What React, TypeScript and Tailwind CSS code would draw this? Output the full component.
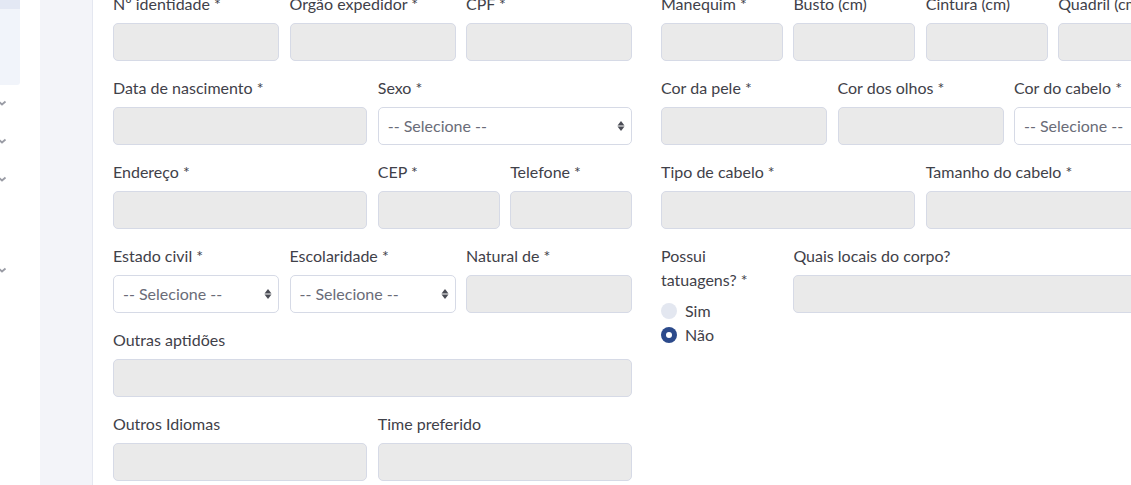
import React from 'react';

const font = { fontFamily: 'Lato, "Noto Sans", sans-serif' };

const Input = () => (
  <div className="h-[38px] rounded-[5px] border border-[#d6dae6] bg-[#eaeaea]" />
);

const Select = () => (
  <div className="flex h-[38px] items-center justify-between rounded-[5px] border border-[#d6dae6] bg-white pl-[9px] pr-[6px] text-[16px] text-[#6a6c78]">
    <span>-- Selecione --</span>
    <svg width="8" height="16" viewBox="0 0 8 16" className="text-[#4a4c55]">
      <path d="M4 3 L7.5 7.5 L0.5 7.5 Z" fill="currentColor" />
      <path d="M4 13 L7.5 8.5 L0.5 8.5 Z" fill="currentColor" />
    </svg>
  </div>
);

const Field = ({ label, span, children }: { label: React.ReactNode; span: string; children?: React.ReactNode }) => (
  <div className={`${span} mb-[15px]`}>
    <div className="mb-[7px] text-[16px] leading-6 text-[#3f4149]">{label}</div>
    {children ?? <Input />}
  </div>
);

const Radio = ({ label, checked }: { label: string; checked?: boolean }) => (
  <div className="flex h-6 items-center gap-2 text-[16px] text-[#3f4149]">
    {checked ? (
      <span className="flex h-4 w-4 items-center justify-center rounded-full bg-[#2c4a8b]">
        <span className="h-[6px] w-[6px] rounded-full bg-white" />
      </span>
    ) : (
      <span className="h-4 w-4 rounded-full bg-[#e3e7f0]" />
    )}
    {label}
  </div>
);

const Chevron = () => (
  <svg width="10" height="8" viewBox="0 0 10 8" className="-ml-[3px]">
    <path d="M1.5 2.5 L5 5.5 L8.5 2.5" stroke="#9a9ca5" strokeWidth="1.8" fill="none" />
  </svg>
);

export default function App() {
  return (
    <div className="flex h-[485px] w-[1131px] overflow-hidden bg-white" style={font}>
      {/* sidebar edge */}
      <div className="flex w-[20px] shrink-0 flex-col">
        <div className="h-[9px] bg-[#e3e8f4]" />
        <div className="h-[76px] rounded-br-[3px] bg-[#f1f4fa]" />
        <div className="flex flex-col">
          <div className="mt-[14px]"><Chevron /></div>
          <div className="mt-[30px]"><Chevron /></div>
          <div className="mt-[30px]"><Chevron /></div>
          <div className="mt-[83px]"><Chevron /></div>
        </div>
      </div>
      <div className="w-[20px] shrink-0" />
      <div className="w-[53px] shrink-0 border-r border-[#e4e7f0] bg-[#f3f4f9]" />

      {/* form */}
      <div className="-mt-2 flex shrink-0 gap-[29px] pl-[20px]">
        <div className="grid w-[519px] shrink-0 grid-cols-12 content-start gap-x-[10.5px]">
          <Field label="Nº identidade *" span="col-span-4" />
          <Field label="Orgão expedidor *" span="col-span-4" />
          <Field label="CPF *" span="col-span-4" />

          <Field label="Data de nascimento *" span="col-span-6" />
          <Field label="Sexo *" span="col-span-6"><Select /></Field>

          <Field label="Endereço *" span="col-span-6" />
          <Field label="CEP *" span="col-span-3" />
          <Field label="Telefone *" span="col-span-3" />

          <Field label="Estado civil *" span="col-span-4"><Select /></Field>
          <Field label="Escolaridade *" span="col-span-4"><Select /></Field>
          <Field label="Natural de *" span="col-span-4" />

          <Field label="Outras aptidões" span="col-span-12" />

          <Field label="Outros Idiomas" span="col-span-6" />
          <Field label="Time preferido" span="col-span-6" />
        </div>

        <div className="grid w-[519px] shrink-0 grid-cols-12 content-start gap-x-[10.5px]">
          <Field label="Manequim *" span="col-span-3" />
          <Field label="Busto (cm)" span="col-span-3" />
          <Field label="Cintura (cm)" span="col-span-3" />
          <Field label="Quadril (cm)" span="col-span-3" />

          <Field label="Cor da pele *" span="col-span-4" />
          <Field label="Cor dos olhos *" span="col-span-4" />
          <Field label="Cor do cabelo *" span="col-span-4"><Select /></Field>

          <Field label="Tipo de cabelo *" span="col-span-6" />
          <Field label="Tamanho do cabelo *" span="col-span-6" />

          <Field label={<>Possui<br />tatuagens? *</>} span="col-span-3">
            <Radio label="Sim" />
            <Radio label="Não" checked />
          </Field>
          <Field label="Quais locais do corpo?" span="col-span-9" />
        </div>
      </div>
    </div>
  );
}
